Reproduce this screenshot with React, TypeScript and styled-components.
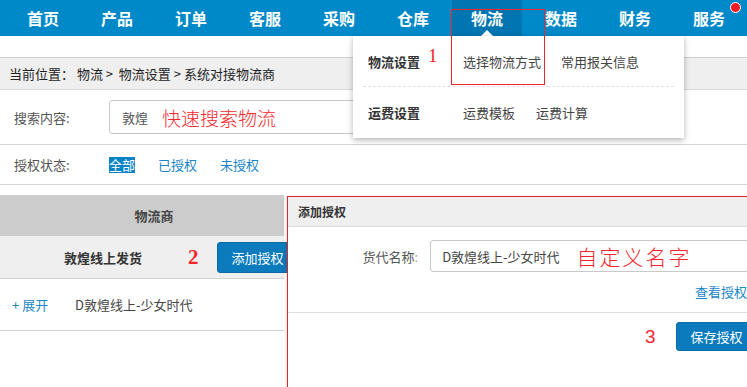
import React from "react";
import styled, { createGlobalStyle } from "styled-components";

const GlobalStyle = createGlobalStyle`
  html, body {
    margin: 0;
    padding: 0;
    width: 747px;
    height: 387px;
    overflow: hidden;
    background: #fff;
    font-family: "Noto Sans CJK SC", "Noto Sans", sans-serif;
    font-size: 13px;
    color: #333;
  }
`;

const Page = styled.div`
  position: relative;
  width: 747px;
  height: 387px;
  overflow: hidden;
`;

const NavBar = styled.div`
  display: flex;
  height: 36px;
  padding-left: 6px;
  background: #0089c9;
`;

const NavItem = styled.div<{ active?: boolean }>`
  position: relative;
  display: flex;
  align-items: center;
  justify-content: center;
  width: 70px;
  margin: 0 2px;
  height: 36px;
  font-size: 16px;
  font-weight: 700;
  color: #fff;
  background: ${(p) => (p.active ? "#0076b1" : "transparent")};

  ${(p) =>
    p.active &&
    `
    &::after {
      content: "";
      position: absolute;
      left: 29px;
      bottom: 0;
      border-left: 6px solid transparent;
      border-right: 6px solid transparent;
      border-bottom: 6px solid #fff;
    }
  `}
`;

const Dot = styled.span`
  position: absolute;
  right: 3px;
  top: 2px;
  width: 9px;
  height: 9px;
  border-radius: 50%;
  background: #f01c24;
  border: 1px solid #fff;
`;

const Breadcrumb = styled.div`
  display: flex;
  align-items: center;
  margin-top: 21px;
  height: 31px;
  padding-left: 9px;
  background: #efefef;
  border-top: 1px solid #cfcfcf;
  border-bottom: 1px solid #d8d8d8;
  color: #222;
  font-size: 13px;
`;

const FilterRow = styled.div<{ h: number }>`
  display: flex;
  align-items: center;
  height: ${(p) => p.h}px;
  border-bottom: 1px solid #d4d4d4;
`;

const Label = styled.div`
  width: 95px;
  padding-left: 14px;
  color: #555;
  font-size: 13px;
`;

const SearchInput = styled.div`
  display: flex;
  align-items: center;
  gap: 14px;
  box-sizing: border-box;
  width: 300px;
  height: 34px;
  padding-left: 12px;
  border: 1px solid #c8c8c8;
  border-radius: 3px;
  color: #555;
`;

const Note = styled.span<{ size: number }>`
  color: #f4262d;
  font-size: ${(p) => p.size}px;
  font-weight: 300;
`;

const StatusLink = styled.span<{ active?: boolean }>`
  margin-right: 23px;
  line-height: 16px;
  color: ${(p) => (p.active ? "#fff" : "#1a86c8")};
  background: ${(p) => (p.active ? "#0a84c6" : "transparent")};
`;

const Table = styled.div`
  width: 284px;
  margin-top: 10px;
`;

const HeadCell = styled.div`
  display: flex;
  align-items: center;
  justify-content: center;
  height: 41px;
  padding-left: 24px;
  background: #cccccc;
  font-weight: 700;
  color: #444;
`;

const GroupRow = styled.div`
  display: flex;
  align-items: center;
  height: 42px;
  padding-left: 64px;
  background: #efefef;
  border-bottom: 1px solid #d2d2d2;
  font-weight: 700;
  color: #333;
  white-space: nowrap;
`;

const ItemRow = styled.div`
  display: flex;
  align-items: center;
  height: 51px;
  padding-left: 12px;
  border-bottom: 1px solid #d2d2d2;
  color: #444;
`;

const Expand = styled.span`
  width: 63px;
  color: #1a86c8;
`;

const BlueButton = styled.button`
  flex-shrink: 0;
  height: 31px;
  padding: 0 14px;
  border: 1px solid #0a6aa3;
  border-radius: 3px;
  background: #0b7bbd;
  color: #fff;
  font-family: inherit;
  font-size: 13px;
  white-space: nowrap;
`;

const Digit = styled.span<{ serif?: boolean; size: number }>`
  color: #f4262d;
  font-family: ${(p) =>
    p.serif ? '"Liberation Serif", serif' : '"Liberation Sans", sans-serif'};
  font-size: ${(p) => p.size}px;
`;

const Menu = styled.div`
  position: absolute;
  left: 353px;
  top: 36px;
  width: 331px;
  height: 102px;
  box-sizing: border-box;
  padding: 0 10px;
  background: #fff;
  box-shadow: 0 2px 6px rgba(0, 0, 0, 0.3);
  display: flex;
  flex-direction: column;
`;

const MenuRow = styled.div<{ dashed?: boolean }>`
  display: flex;
  align-items: center;
  height: 50px;
  padding-left: 5px;
  border-bottom: ${(p) => (p.dashed ? "1px dashed #e2e2e2" : "none")};
`;

const MenuTitle = styled.span`
  width: 60px;
  font-weight: 700;
  color: #333;
`;

const MenuLink = styled.span<{ gap: number }>`
  margin-right: ${(p) => p.gap}px;
  color: #444;
`;

const AnnotBox = styled.div`
  position: absolute;
  left: 451px;
  top: 9px;
  width: 92px;
  height: 74px;
  border: 1px solid #f0262d;
  pointer-events: none;
`;

const Modal = styled.div`
  position: absolute;
  left: 287px;
  top: 196px;
  width: 480px;
  height: 220px;
  background: #fff;
  border: 1px solid #e0262d;
  box-shadow: -2px 0 3px rgba(0, 0, 0, 0.08);
`;

const ModalHead = styled.div`
  display: flex;
  align-items: center;
  height: 29px;
  padding-left: 10px;
  background: #efefef;
  border-bottom: 1px solid #dcdcdc;
  font-weight: 700;
  font-size: 12px;
  color: #333;
`;

const FieldRow = styled.div`
  display: flex;
  align-items: center;
  margin-top: 13px;
  height: 32px;
`;

const FieldLabel = styled.div`
  width: 143px;
  padding-right: 12px;
  text-align: right;
  box-sizing: border-box;
  color: #555;
`;

const Colon = styled.span`
  color: #c9a26a;
`;

const NameInput = styled.div`
  display: flex;
  align-items: center;
  gap: 17px;
  box-sizing: border-box;
  width: 340px;
  height: 32px;
  padding-left: 11px;
  border: 1px solid #c8c8c8;
  border-radius: 3px;
  color: #444;
`;

const HelpRow = styled.div`
  display: flex;
  justify-content: flex-start;
  height: 41px;
  padding-left: 407px;
  padding-top: 10px;
  box-sizing: border-box;
  border-bottom: 1px solid #dcdcdc;
  color: #1a86c8;
  white-space: nowrap;
`;

const FooterRow = styled.div`
  display: flex;
  align-items: center;
  gap: 20px;
  padding-left: 357px;
  padding-top: 9px;
`;

const App: React.FC = () => {
  const navs = ["首页", "产品", "订单", "客服", "采购", "仓库", "物流", "数据", "财务", "服务"];
  return (
    <Page>
      <GlobalStyle />
      <NavBar>
        {navs.map((n) => (
          <NavItem key={n} active={n === "物流"}>
            {n}
            {n === "服务" && <Dot />}
          </NavItem>
        ))}
      </NavBar>
      <Breadcrumb>当前位置：&nbsp;物流 &gt; &nbsp;物流设置 &gt; 系统对接物流商</Breadcrumb>
      <FilterRow h={54}>
        <Label>搜索内容:</Label>
        <SearchInput>
          敦煌
          <Note size={19}>快速搜索物流</Note>
        </SearchInput>
      </FilterRow>
      <FilterRow h={39}>
        <Label>授权状态:</Label>
        <StatusLink active>全部</StatusLink>
        <StatusLink>已授权</StatusLink>
        <StatusLink>未授权</StatusLink>
      </FilterRow>
      <Table>
        <HeadCell>物流商</HeadCell>
        <GroupRow>
          敦煌线上发货
          <Digit serif size={21} style={{ margin: "0 18px 0 46px" }}>
            2
          </Digit>
          <BlueButton>添加授权</BlueButton>
        </GroupRow>
        <ItemRow>
          <Expand>+ 展开</Expand>
          D敦煌线上-少女时代
        </ItemRow>
      </Table>

      <Menu>
        <MenuRow dashed>
          <MenuTitle>物流设置</MenuTitle>
          <Digit serif size={19} style={{ marginTop: -10, width: 35 }}>
            1
          </Digit>
          <MenuLink gap={20}>选择物流方式</MenuLink>
          <MenuLink gap={0}>常用报关信息</MenuLink>
        </MenuRow>
        <MenuRow>
          <MenuTitle style={{ width: 95 }}>运费设置</MenuTitle>
          <MenuLink gap={21}>运费模板</MenuLink>
          <MenuLink gap={0}>运费计算</MenuLink>
        </MenuRow>
      </Menu>
      <AnnotBox />

      <Modal>
        <ModalHead>添加授权</ModalHead>
        <FieldRow>
          <FieldLabel>
            货代名称<Colon>:</Colon>
          </FieldLabel>
          <NameInput>
            D敦煌线上-少女时代
            <Note size={21} style={{ letterSpacing: 2 }}>
              自定义名字
            </Note>
          </NameInput>
        </FieldRow>
        <HelpRow>查看授权帮助</HelpRow>
        <FooterRow>
          <Digit size={19}>3</Digit>
          <BlueButton style={{ height: 29 }}>保存授权</BlueButton>
        </FooterRow>
      </Modal>
    </Page>
  );
};

export default App;
